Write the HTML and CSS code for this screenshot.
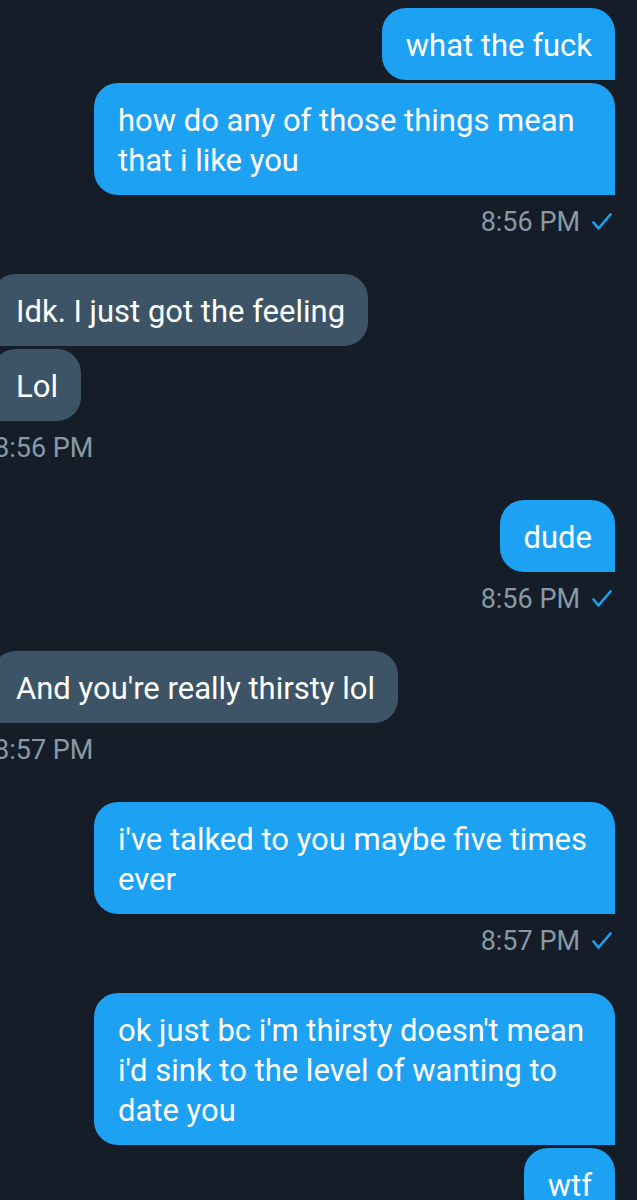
FILE: index.html
```html
<!DOCTYPE html>
<html>
    <head>
    <title>messages</title>
    <link rel="stylesheet" href="styles.css">
    </head>
    <body>
        <div class="chat">

            <div class="group sent">
                <div class="bubble">what the fuck</div>
                <div class="bubble">how do any of those things mean that i like you</div>
                <div class="time">8:56 PM
                    <svg class="check" viewBox="0 0 20 18"><polyline points="1.5,9.5 6.5,15.5 18.5,1.5"/></svg>
                </div>
            </div>

            <div class="group received">
                <div class="bubble">Idk. I just got the feeling</div>
                <div class="bubble">Lol</div>
                <div class="time">8:56 PM</div>
            </div>

            <div class="group sent">
                <div class="bubble">dude</div>
                <div class="time">8:56 PM
                    <svg class="check" viewBox="0 0 20 18"><polyline points="1.5,9.5 6.5,15.5 18.5,1.5"/></svg>
                </div>
            </div>

            <div class="group received">
                <div class="bubble">And you're really thirsty lol</div>
                <div class="time">8:57 PM</div>
            </div>

            <div class="group sent">
                <div class="bubble">i've talked to you maybe five times ever</div>
                <div class="time">8:57 PM
                    <svg class="check" viewBox="0 0 20 18"><polyline points="1.5,9.5 6.5,15.5 18.5,1.5"/></svg>
                </div>
            </div>

            <div class="group sent">
                <div class="bubble">ok just bc i'm thirsty doesn't mean i'd sink to the level of wanting to date you</div>
                <div class="bubble">wtf</div>
            </div>

        </div>
    </body>
</html>
```

FILE: styles.css
```css
body{
    margin: 0;
    background-color: #151e28;
    font-family: Roboto, "Liberation Sans", sans-serif;
    overflow: hidden;
}
.chat{
    padding: 8px 22px 40px 0;
}
.group{
    display: flex;
    flex-direction: column;
    gap: 3px;
    margin-bottom: 36px;
}
.sent{
    align-items: flex-end;
}
.received{
    align-items: flex-start;
    margin-left: -8px;
}
.bubble{
    max-width: 474px;
    padding: 18px 23px 14px 24px;
    font-size: 31px;
    line-height: 40px;
    color: #ffffff;
}
.sent .bubble{
    background-color: #1da1f2;
    border-radius: 24px 24px 0 24px;
}
.received .bubble{
    background-color: #3d5466;
    border-radius: 24px 24px 24px 0;
}
.time{
    display: flex;
    align-items: center;
    gap: 12px;
    margin-top: 8px;
    font-size: 27px;
    line-height: 32px;
    color: #8899a6;
}
.sent .time{
    padding-right: 3px;
}
.received .time{
    padding-left: 2px;
}
.check{
    width: 20px;
    height: 18px;
    fill: none;
    stroke: #1da1f2;
    stroke-width: 2.6;
    stroke-linecap: round;
    stroke-linejoin: round;
}
```
